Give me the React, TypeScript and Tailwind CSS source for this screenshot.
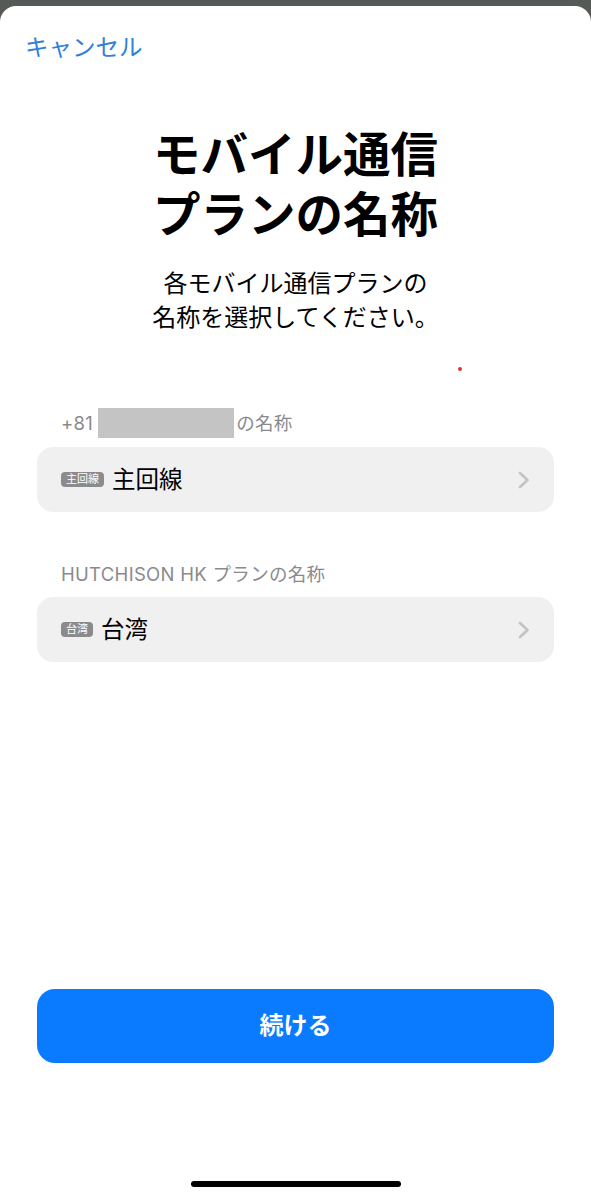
import React from "react";

const PlanRow = ({ badge, label }: { badge: string; label: string }) => {
  return (
    <button className="flex h-[65px] w-full items-center rounded-[16px] bg-[#f0f0f1] pl-[24px] pr-[24px] text-left">
      <span className="flex h-[15px] items-center rounded-[4px] bg-[#8b8b8d] px-[5px] text-[11px] leading-[15px] text-white">
        {badge}
      </span>
      <span className="ml-[8px] text-[23.5px] leading-[30px] text-black">{label}</span>
      <span className="flex-1" />
      <svg width="12" height="18" viewBox="0 0 12 18" fill="none">
        <path
          d="M2 2 L9.5 9 L2 16"
          stroke="#c3c3c6"
          strokeWidth="2.6"
          strokeLinecap="round"
          strokeLinejoin="round"
        />
      </svg>
    </button>
  );
};

const SectionLabel = ({ children }: { children: React.ReactNode }) => (
  <div className="flex h-[24px] items-center px-[24px] text-[18.5px] leading-[24px] tracking-[0.3px] text-[#8a8a8e]">
    {children}
  </div>
);

export default function App() {
  return (
    <div className="relative h-[1200px] w-[591px] overflow-hidden bg-[#565a56] font-['Inter','Noto_Sans_CJK_JP',sans-serif]">
      <div className="mt-[6px] flex h-[1194px] flex-col rounded-t-[16px] bg-white">
        {/* top bar */}
        <div className="px-[25px] pt-[27px]">
          <span className="text-[23.5px] leading-[30px] text-[#2f80d9]">キャンセル</span>
        </div>

        {/* heading */}
        <h1 className="mt-[62px] text-center text-[47.5px] font-bold leading-[60px] text-black">
          モバイル通信
          <br />
          プランの名称
        </h1>
        <p className="mt-[22px] text-center text-[24px] leading-[34px] text-black">
          各モバイル通信プランの
          <br />
          名称を選択してください。
        </p>

        {/* plans */}
        <div className="mt-[76px] px-[37px]">
          <SectionLabel>
            <span>+81</span>
            <span className="ml-[5px] mr-[2px] h-[30px] w-[136px] shrink-0 bg-[#c4c4c4]" />
            <span>の名称</span>
          </SectionLabel>
          <div className="mt-[12px]">
            <PlanRow badge="主回線" label="主回線" />
          </div>

          <div className="mt-[50px]">
            <SectionLabel>HUTCHISON HK プランの名称</SectionLabel>
          </div>
          <div className="mt-[11px]">
            <PlanRow badge="台湾" label="台湾" />
          </div>
        </div>

        <div className="flex-1" />

        {/* continue */}
        <div className="px-[37px]">
          <button className="flex h-[74px] w-full items-center justify-center rounded-[18px] bg-[#0a7bff] text-[24px] font-bold text-white">
            続ける
          </button>
        </div>
        <div className="mb-[13px] mt-[118px] flex justify-center">
          <div className="h-[6px] w-[210px] rounded-full bg-black" />
        </div>
      </div>

      <span className="absolute left-[458px] top-[367px] h-[4px] w-[4px] rounded-full bg-[#d8392b]" />
    </div>
  );
}
